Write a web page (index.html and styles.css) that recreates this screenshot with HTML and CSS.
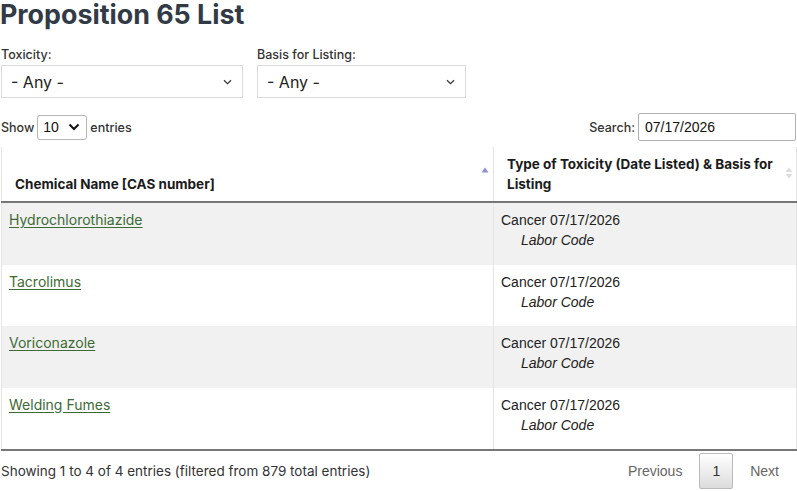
FILE: index.html
```html
<!DOCTYPE html>
<html lang="en">
<head>
<meta charset="utf-8">
<title>Proposition 65 List</title>
<link rel="stylesheet" href="styles.css">
</head>
<body>
<main class="page">
  <h1 class="title">Proposition 65 List</h1>

  <div class="filters">
    <div class="filter filter-toxicity">
      <label class="filter-label">Toxicity:</label>
      <div class="select">
        <span>- Any -</span>
        <svg class="chev" width="9" height="6" viewBox="0 0 9 6"><path d="M1 1.2 L4.5 4.6 L8 1.2" fill="none" stroke="#333" stroke-width="1.2"/></svg>
      </div>
    </div>
    <div class="filter filter-basis">
      <label class="filter-label">Basis for Listing:</label>
      <div class="select">
        <span>- Any -</span>
        <svg class="chev" width="9" height="6" viewBox="0 0 9 6"><path d="M1 1.2 L4.5 4.6 L8 1.2" fill="none" stroke="#333" stroke-width="1.2"/></svg>
      </div>
    </div>
  </div>

  <div class="table-top">
    <div class="length">
      <span>Show</span>
      <div class="length-select">
        <span>10</span>
        <svg width="12" height="8" viewBox="0 0 12 8"><path d="M1.5 1.5 L6 6 L10.5 1.5" fill="none" stroke="#111" stroke-width="2"/></svg>
      </div>
      <span>entries</span>
    </div>
    <div class="search">
      <span>Search:</span>
      <div class="search-input">07/17/2026</div>
    </div>
  </div>

  <table class="list">
    <colgroup>
      <col class="c-name">
      <col class="c-type">
    </colgroup>
    <thead>
      <tr>
        <th class="col-name">
          <span>Chemical Name [CAS number]</span>
          <svg class="sort" width="8" height="6" viewBox="0 0 8 6"><path d="M0.5 5.5 L4 0.5 L7.5 5.5 Z" fill="#8a8fd6"/></svg>
        </th>
        <th class="col-type">
          <span>Type of Toxicity (Date Listed) &amp; Basis for Listing</span>
          <svg class="sort both" width="8" height="12" viewBox="0 0 8 12"><path d="M0.5 5 L4 0.5 L7.5 5 Z M0.5 7 L4 11.5 L7.5 7 Z" fill="#dcdcdc"/></svg>
        </th>
      </tr>
    </thead>
    <tbody>
      <tr class="odd">
        <td><a href="#">Hydrochlorothiazide</a></td>
        <td><div>Cancer 07/17/2026</div><div class="basis">Labor Code</div></td>
      </tr>
      <tr>
        <td><a href="#">Tacrolimus</a></td>
        <td><div>Cancer 07/17/2026</div><div class="basis">Labor Code</div></td>
      </tr>
      <tr class="odd">
        <td><a href="#">Voriconazole</a></td>
        <td><div>Cancer 07/17/2026</div><div class="basis">Labor Code</div></td>
      </tr>
      <tr>
        <td><a href="#">Welding Fumes</a></td>
        <td><div>Cancer 07/17/2026</div><div class="basis">Labor Code</div></td>
      </tr>
    </tbody>
  </table>

  <div class="table-bottom">
    <div class="info">Showing 1 to 4 of 4 entries (filtered from 879 total entries)</div>
    <div class="paging">
      <span class="page-btn disabled">Previous</span>
      <span class="page-btn current">1</span>
      <span class="page-btn disabled">Next</span>
    </div>
  </div>
</main>
</body>
</html>
```

FILE: styles.css
```css
html, body {
  margin: 0;
  padding: 0;
  background: #fff;
}

body {
  font-family: Inter, "Liberation Sans", Arial, sans-serif;
  color: #1b1b1b;
}

.page {
  width: 795px;
  margin-left: 1px;
}

.title {
  margin: 0 0 0 -1px;
  font-size: 26.8px;
  line-height: 28px;
  font-weight: 700;
  color: #323a45;
  letter-spacing: 0;
}

.filters {
  display: flex;
  gap: 14px;
  margin-top: 19px;
}

.filter {
  display: flex;
  flex-direction: column;
}

.filter-toxicity { width: 242px; }
.filter-basis { width: 209px; }

.filter-label {
  font-size: 12.5px;
  font-weight: 500;
  line-height: 16px;
  color: #333;
  margin-bottom: 2px;
}

.select {
  height: 31px;
  border: 1px solid #dcdcdc;
  display: flex;
  align-items: center;
  justify-content: space-between;
  padding: 0 9px 0 9px;
  font-size: 16px;
  color: #222;
}

.select .chev { margin-right: 1px; }

.table-top {
  display: flex;
  justify-content: space-between;
  align-items: center;
  margin-top: 15px;
  height: 28px;
  font-size: 12.5px;
  font-weight: 500;
  color: #333;
}

.length {
  display: flex;
  align-items: center;
  gap: 3px;
}

.length-select {
  width: 50px;
  height: 25px;
  border: 1px solid #b5b5b5;
  border-radius: 3px;
  display: flex;
  align-items: center;
  justify-content: space-between;
  padding: 0 6px 0 5px;
  box-sizing: border-box;
  font-family: "Liberation Sans", Arial, sans-serif;
  font-size: 14px;
  font-weight: 400;
  color: #111;
}

.search {
  display: flex;
  align-items: center;
  gap: 3px;
}

.search-input {
  width: 158px;
  height: 28px;
  box-sizing: border-box;
  border: 1px solid #b0b0b0;
  border-radius: 2px;
  padding: 0 6px;
  display: flex;
  align-items: center;
  font-family: "Liberation Sans", Arial, sans-serif;
  font-size: 14px;
  font-weight: 400;
  color: #111;
}

.list {
  width: 795px;
  table-layout: fixed;
  margin-top: 6px;
  border-collapse: collapse;
  border-left: 1px solid #e4e4e4;
  border-right: 1px solid #e4e4e4;
  border-bottom: 2px solid #777;
}

.list col.c-name { width: 492px; }
.list col.c-type { width: 303px; }

.list th {
  position: relative;
  text-align: left;
  vertical-align: bottom;
  font-size: 13.5px;
  font-weight: 700;
  line-height: 20px;
  color: #1b1b1b;
  border-bottom: 2px solid #777;
  border-left: 1px solid #e4e4e4;
}

.list th.col-name {
  padding: 7px 20px 7px 13px;
}

.list th.col-type {
  padding: 7px 22px 7px 13px;
}

.list th .sort {
  position: absolute;
  right: 4px;
  top: 20px;
}

.list th .sort.both {
  right: 3px;
  top: 20px;
}

.list td {
  vertical-align: top;
  border-left: 1px solid #e4e4e4;
  height: 39px;
  padding: 7px 8px 14.5px 7px;
  font-size: 14px;
  line-height: 20px;
}

.list td:last-child {
  font-family: "Liberation Sans", Arial, sans-serif;
  color: #222;
}

.list tr.odd td { background: #f1f1f1; }

.list a {
  color: #3e6b35;
  text-decoration: underline;
  text-underline-offset: 2px;
}

.basis {
  font-style: italic;
  padding-left: 20px;
}

.table-bottom {
  display: flex;
  justify-content: space-between;
  align-items: center;
  margin-top: 2px;
}

.info {
  font-size: 13.5px;
  color: #333;
}

.paging {
  display: flex;
  align-items: center;
  font-family: "Liberation Sans", Arial, sans-serif;
  font-size: 14px;
  color: #666;
  margin-right: 2px;
}

.page-btn {
  padding: 9px 14px;
  line-height: 16px;
  margin-left: 2px;
  border: 1px solid transparent;
}

.page-btn.current {
  color: #333;
  border: 1px solid #bbb;
  border-radius: 2px;
  background: linear-gradient(to bottom, #fff 0%, #dcdcdc 100%);
  padding: 9px 12px;
}
```
